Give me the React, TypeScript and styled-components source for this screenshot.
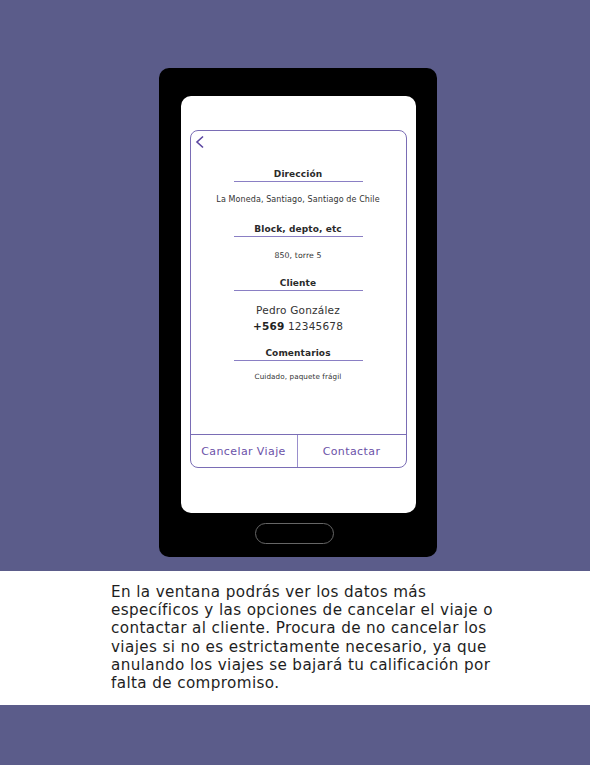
import React from "react";
import styled, { createGlobalStyle } from "styled-components";

const Global = createGlobalStyle`
  html, body { margin: 0; padding: 0; }
  body { background: #5b5c8a; font-family: "DejaVu Sans", "Open Sans", sans-serif; }
`;

const Page = styled.div`
  width: 590px;
  height: 765px;
  display: flex;
  flex-direction: column;
  background: #5b5c8a;
`;

const Stage = styled.div`
  height: 571px;
  display: flex;
  padding: 68px 0 0 159px;
  box-sizing: border-box;
`;

const Phone = styled.div`
  width: 278px;
  height: 489px;
  background: #000;
  border-radius: 10px;
  display: flex;
  flex-direction: column;
  align-items: center;
  padding-top: 28px;
  box-sizing: border-box;
`;

const Screen = styled.div`
  width: 235px;
  height: 417px;
  background: #fff;
  border-radius: 10px;
  padding: 34px 9px 0;
  box-sizing: border-box;
`;

const Card = styled.div`
  height: 338px;
  border: 1px solid #7a6db5;
  border-radius: 8px;
  display: flex;
  flex-direction: column;
  box-sizing: border-box;
`;

const Body = styled.div`
  flex: 1;
  position: relative;
  display: flex;
  flex-direction: column;
  align-items: center;
  padding-top: 37px;
`;

const Back = styled.svg`
  position: absolute;
  left: 4px;
  top: 4px;
`;

const Title = styled.div<{ $gap?: number }>`
  width: 129px;
  text-align: center;
  font-size: 9px;
  line-height: 12px;
  font-weight: 700;
  color: #2a2a2a;
  letter-spacing: 0.1px;
  padding-bottom: 1px;
  border-bottom: 1.5px solid #8a7fc4;
  margin-top: ${(p) => p.$gap ?? 0}px;
`;

const Small = styled.div<{ $size?: number; $top?: number }>`
  font-size: ${(p) => p.$size ?? 7.5}px;
  line-height: 10px;
  color: #333;
  margin-top: ${(p) => p.$top ?? 13}px;
  letter-spacing: 0.1px;
`;

const Client = styled.div`
  margin-top: 11px;
  text-align: center;
  font-size: 10.5px;
  line-height: 16px;
  color: #333;
  letter-spacing: 0.2px;
  b { font-weight: 700; color: #222; }
`;

const Actions = styled.div`
  height: 32px;
  border-top: 1px solid #7a6db5;
  display: grid;
  grid-template-columns: 107px 1fr;
`;

const Action = styled.div<{ $divider?: boolean }>`
  display: flex;
  align-items: center;
  justify-content: center;
  font-size: 11px;
  color: #6b52a8;
  letter-spacing: 0.4px;
  border-right: ${(p) => (p.$divider ? "1px solid #9a8fcc" : "none")};
`;

const HomeButton = styled.div`
  margin: 10px 8px 0 0;
  width: 77px;
  height: 19px;
  border: 1.5px solid #666;
  border-radius: 12px;
`;

const Caption = styled.div`
  height: 134px;
  background: #fff;
  padding: 12px 0 0 111px;
  box-sizing: border-box;
  font-size: 15.2px;
  line-height: 18.2px;
  letter-spacing: 0.38px;
  color: #1e1e1e;
`;

export default function App() {
  return (
    <>
      <Global />
      <Page>
        <Stage>
          <Phone>
            <Screen>
              <Card>
                <Body>
                  <Back width="10" height="14" viewBox="0 0 10 14">
                    <path d="M8 1.5 L2 7 L8 12.5" fill="none" stroke="#5a45a0" strokeWidth="1.6" />
                  </Back>
                  <Title>Dirección</Title>
                  <Small $size={8}>La Moneda, Santiago, Santiago de Chile</Small>
                  <Title $gap={18}>Block, depto, etc</Title>
                  <Small $size={7.8} $top={14}>850, torre 5</Small>
                  <Title $gap={16}>Cliente</Title>
                  <Client>
                    Pedro González
                    <br />
                    <b>+569</b> 12345678
                  </Client>
                  <Title $gap={13}>Comentarios</Title>
                  <Small $size={7.2} $top={11}>Cuidado, paquete frágil</Small>
                </Body>
                <Actions>
                  <Action $divider>Cancelar Viaje</Action>
                  <Action>Contactar</Action>
                </Actions>
              </Card>
            </Screen>
            <HomeButton />
          </Phone>
        </Stage>
        <Caption>
          En la ventana podrás ver los datos más
          <br />
          específicos y las opciones de cancelar el viaje o
          <br />
          contactar al cliente. Procura de no cancelar los
          <br />
          viajes si no es estrictamente necesario, ya que
          <br />
          anulando los viajes se bajará tu calificación por
          <br />
          falta de compromiso.
        </Caption>
      </Page>
    </>
  );
}
